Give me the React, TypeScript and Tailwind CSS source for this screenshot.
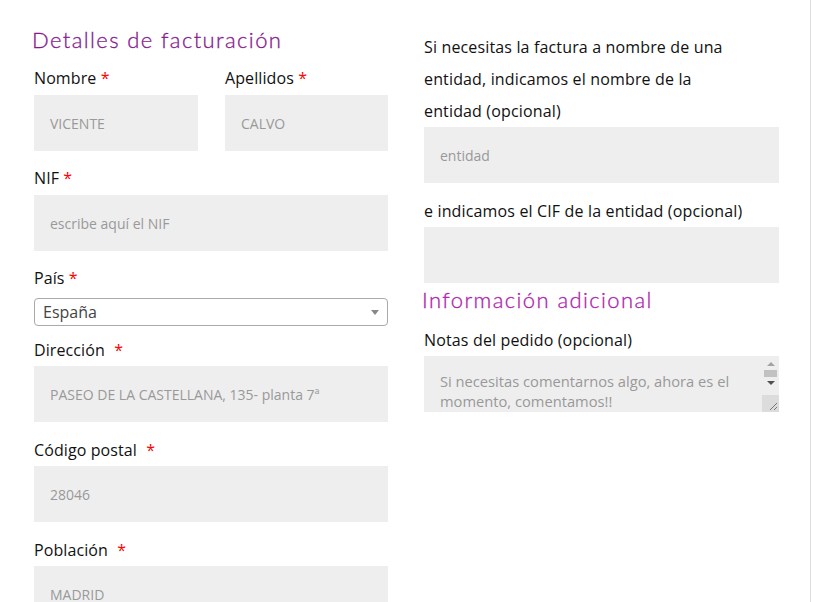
import React from "react";

const Req = ({ gap = false }: { gap?: boolean }) => (
  <span className={`text-[#ff0000] ${gap ? "ml-[5px]" : ""}`}>*</span>
);

const Box = ({ text, className = "" }: { text?: string; className?: string }) => (
  <div className={`shrink-0 h-[56px] bg-[#eeeeee] flex items-center pl-[16px] text-[14px] text-[#999999] ${className}`}>
    {text}
  </div>
);

const labelCls = "shrink-0 h-[24px] leading-[24px] text-[16px] text-[#111111] tracking-[0.1px]";

export default function App() {
  return (
    <div
      className="w-[820px] h-[602px] bg-white overflow-hidden flex"
      style={{ fontFamily: "'Open Sans', 'Liberation Sans', sans-serif" }}
    >
      <div className="w-[811px] h-full border-r border-[#dddddd] flex overflow-hidden">
        {/* Left column */}
        <div className="ml-[34px] w-[354px] flex flex-col">
          <h2
            className="shrink-0 mt-[27px] ml-[-2px] h-[26px] leading-[26px] text-[22px] font-light text-[#861890] tracking-[1.4px]"
            style={{ fontFamily: "Lato, 'Noto Sans', sans-serif", WebkitTextStroke: "0.3px #861890" }}
          >
            Detalles de facturación
          </h2>
          <div className="shrink-0 mt-[13px] flex gap-[27px]">
            <div className="w-[164px] flex flex-col">
              <div className={labelCls}>
                Nombre <Req />
              </div>
              <Box text="VICENTE" className="mt-[5px]" />
            </div>
            <div className="w-[163px] flex flex-col">
              <div className={labelCls}>
                Apellidos <Req />
              </div>
              <Box text="CALVO" className="mt-[5px]" />
            </div>
          </div>
          <div className={`mt-[15px] ${labelCls}`}>
            NIF <Req />
          </div>
          <Box text="escribe aquí el NIF" className="mt-[5px]" />
          <div className={`mt-[15px] ${labelCls}`}>
            País <Req />
          </div>
          <div className="shrink-0 mt-[8px] h-[28px] border border-[#aaaaaa] rounded-[4px] flex items-center justify-between pl-[8px] pr-[8px]">
            <span className="text-[16px] text-[#444444]">España</span>
            <span className="w-0 h-0 border-l-[4px] border-r-[4px] border-t-[5px] border-l-transparent border-r-transparent border-t-[#888888]" />
          </div>
          <div className={`mt-[12px] ${labelCls}`}>
            Dirección <Req gap />
          </div>
          <Box text="PASEO DE LA CASTELLANA, 135- planta 7ª" className="mt-[4px]" />
          <div className={`mt-[16px] ${labelCls}`}>
            Código postal <Req gap />
          </div>
          <Box text="28046" className="mt-[4px]" />
          <div className={`mt-[16px] ${labelCls}`}>
            Población <Req gap />
          </div>
          <Box text="MADRID" className="mt-[4px]" />
        </div>

        {/* Right column */}
        <div className="ml-[36px] w-[355px] flex flex-col">
          <p className="shrink-0 mt-[31px] text-[16px] leading-[32px] text-[#111111] tracking-[0.15px] pr-[40px]">
            Si necesitas la factura a nombre de una entidad, indicamos el nombre de la entidad (opcional)
          </p>
          <Box text="entidad" />
          <div className="shrink-0 mt-[12px] h-[32px] leading-[32px] text-[16px] text-[#111111] tracking-[0.15px]">
            e indicamos el CIF de la entidad (opcional)
          </div>
          <Box />
          <h2
            className="shrink-0 mt-[4px] ml-[-2px] h-[26px] leading-[26px] text-[22px] font-light text-[#ad22ad] tracking-[1.4px]"
            style={{ fontFamily: "Lato, 'Noto Sans', sans-serif", WebkitTextStroke: "0.3px #ad22ad" }}
          >
            Información adicional
          </h2>
          <div className="shrink-0 mt-[11px] h-[32px] leading-[32px] text-[16px] text-[#111111] tracking-[0.15px]">
            Notas del pedido (opcional)
          </div>
          <div className="shrink-0 relative h-[56px] bg-[#eeeeee] pl-[16px] pr-[24px] pt-[15px] text-[14.7px] leading-[20px] text-[#999999] overflow-hidden">
            Si necesitas comentarnos algo, ahora es el momento, comentamos!!
            <div className="absolute right-0 top-0 w-[17px] h-full flex flex-col items-center">
              <div className="mt-[6px] w-0 h-0 border-l-[4px] border-r-[4px] border-b-[4px] border-l-transparent border-r-transparent border-b-[#a3a3a3]" />
              <div className="mt-[4px] w-[13px] h-[7px] bg-[#c1c1c1]" />
              <div className="mt-[4px] w-0 h-0 border-l-[4px] border-r-[4px] border-t-[4px] border-l-transparent border-r-transparent border-t-[#505050]" />
              <div className="mt-auto w-[17px] h-[17px] bg-[#dcdcdc] relative">
                <svg width="17" height="17" viewBox="0 0 17 17" className="absolute inset-0">
                  <line x1="15" y1="8" x2="8" y2="15" stroke="#777" strokeWidth="1" />
                  <line x1="15" y1="12" x2="12" y2="15" stroke="#777" strokeWidth="1" />
                </svg>
              </div>
            </div>
          </div>
        </div>
      </div>
    </div>
  );
}
